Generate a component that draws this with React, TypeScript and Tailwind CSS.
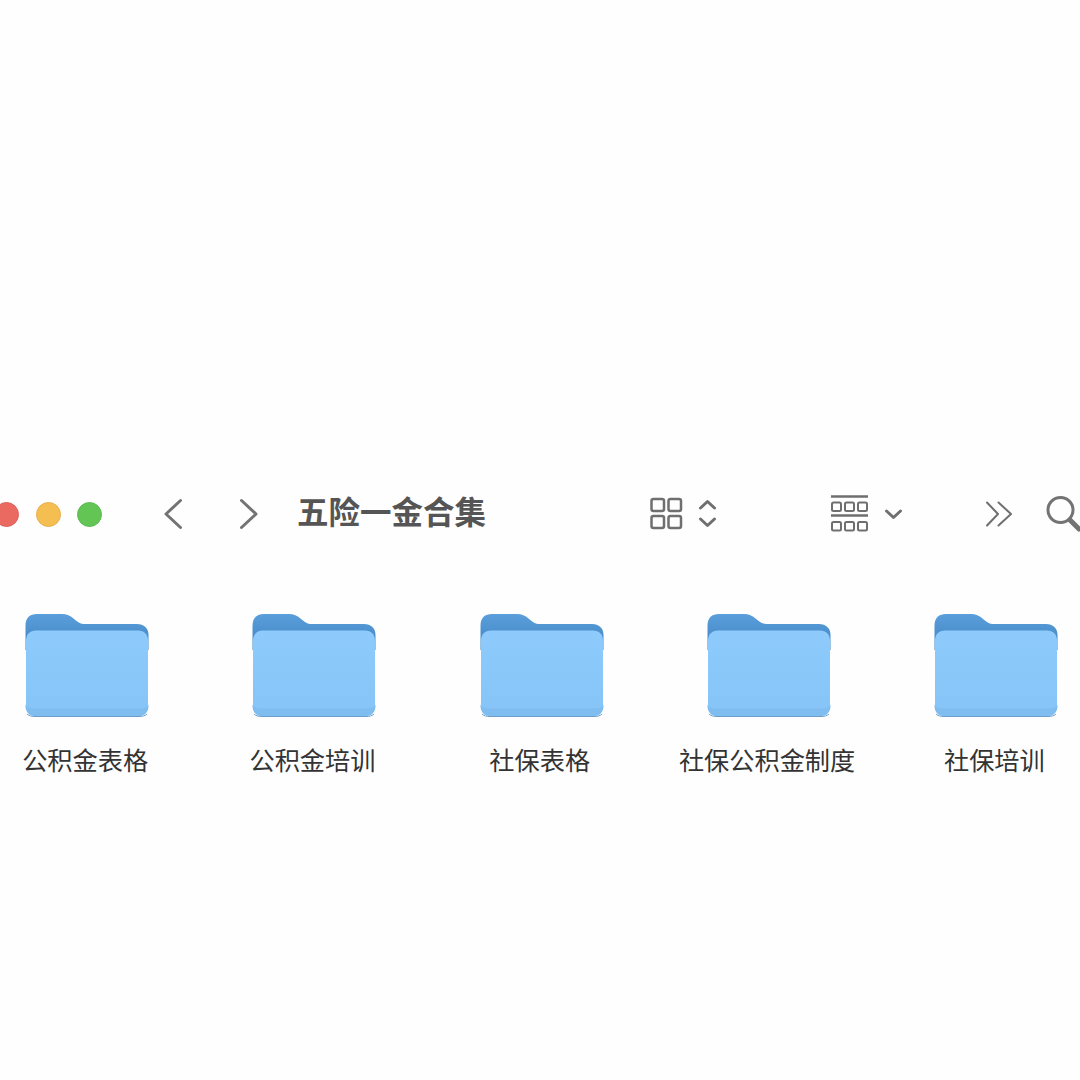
const folders = ["公积金表格", "公积金培训", "社保表格", "社保公积金制度", "社保培训"];

function Folder() {
  return (
    <svg width="126" height="108" viewBox="0 0 126 108" fill="none">
      <defs>
        <linearGradient id="folderBack" x1="0" y1="0" x2="0" y2="1">
          <stop offset="0" stopColor="#5a9edb" />
          <stop offset="1" stopColor="#3f83c2" />
        </linearGradient>
        <linearGradient id="folderFront" x1="0" y1="0" x2="0" y2="1">
          <stop offset="0" stopColor="#8ecbfc" />
          <stop offset="1" stopColor="#86c4f7" />
        </linearGradient>
      </defs>
      <path
        d="M1.500 16C1.500 7.500 6 4 13 4H38C43 4 46 5.500 49.500 8.500C53.500 12 56 14 61 14H113C120 14 124.500 18 124.500 25V40H1.500Z"
        fill="url(#folderBack)"
      />
      <path d="M2 31C2 24 6 20.500 12 20.500H114C120 20.500 124 24 124 31V96C124 102 120.500 106 115 106H11C5.500 106 2 102 2 96Z" fill="url(#folderFront)" />
      <path d="M1.500 94.500C2.500 97 5 98.500 9 98.500H117C121 98.500 123.500 97 124.500 94.500V96C124.500 102 120.500 106 115 106H11C5.500 106 1.500 102 1.500 96Z" fill="#7fbcf0" />
      <path d="M3 104C5 106 8 106.500 11 106.500H115C118 106.500 121 106 123 104" stroke="#6e9fcb" strokeWidth="1" />
    </svg>
  );
}

function Back() {
  return (
    <svg width="22" height="32" viewBox="0 0 22 32" fill="none" stroke="#737373" strokeWidth="3" strokeLinecap="round" strokeLinejoin="round">
      <path d="M17.500 2.500L3 16L17.500 29.500" />
    </svg>
  );
}

function Forward() {
  return (
    <svg width="22" height="32" viewBox="0 0 22 32" fill="none" stroke="#737373" strokeWidth="3" strokeLinecap="round" strokeLinejoin="round">
      <path d="M4.500 2.500L19 16L4.500 29.500" />
    </svg>
  );
}

function GridIcon() {
  return (
    <svg width="70" height="34" viewBox="0 0 70 34" fill="none" stroke="#6f6f6f" strokeWidth="2.500">
      <rect x="1.500" y="2" width="12.500" height="12" rx="2" />
      <rect x="18.500" y="2" width="12.500" height="12" rx="2" />
      <rect x="1.500" y="19" width="12.500" height="12" rx="2" />
      <rect x="18.500" y="19" width="12.500" height="12" rx="2" />
      <path d="M50.500 11L57.500 4.500L64.500 11" strokeWidth="3" strokeLinecap="round" strokeLinejoin="round" />
      <path d="M50.500 22L57.500 28.500L64.500 22" strokeWidth="3" strokeLinecap="round" strokeLinejoin="round" />
    </svg>
  );
}

function GroupIcon() {
  return (
    <svg width="72" height="38" viewBox="0 0 72 38" fill="none" stroke="#6f6f6f" strokeWidth="2">
      <path d="M0 1.500H37M0 20.500H37" strokeWidth="2.500" />
      <rect x="1" y="7.500" width="9" height="8.500" rx="1.500" />
      <rect x="14" y="7.500" width="9" height="8.500" rx="1.500" />
      <rect x="27" y="7.500" width="9" height="8.500" rx="1.500" />
      <rect x="1" y="27" width="9" height="8.500" rx="1.500" />
      <rect x="14" y="27" width="9" height="8.500" rx="1.500" />
      <rect x="27" y="27" width="9" height="8.500" rx="1.500" />
      <path d="M55.500 16L62.500 22.500L69.500 16" strokeWidth="3" strokeLinecap="round" strokeLinejoin="round" />
    </svg>
  );
}

function More() {
  return (
    <svg width="26" height="26" viewBox="0 0 26 26" fill="none" stroke="#6f6f6f" strokeWidth="2" strokeLinecap="round" strokeLinejoin="round">
      <path d="M1 1.500L12 13L1 24.500" />
      <path d="M12.500 1.500L25 13L12.500 24.500" />
    </svg>
  );
}

function Search() {
  return (
    <svg width="36" height="36" viewBox="0 0 36 36" fill="none" stroke="#737373" strokeLinecap="round" className="shrink-0">
      <circle cx="14.500" cy="14" r="12.500" strokeWidth="3" />
      <path d="M24 24L33 33" strokeWidth="5" />
    </svg>
  );
}

export default function App() {
  return (
    <main className="w-[1080px] h-[1080px] overflow-hidden bg-[#fefefe] pt-[493px] font-['Liberation_Sans','Noto_Sans_CJK_SC',sans-serif]">
      <header className="flex items-center h-[42px] -ml-[6px]">
        <div className="flex items-center gap-[16.500px] shrink-0">
          <span className="w-[25px] h-[25px] rounded-full bg-[#ea6a61] border border-[#e0605a]" />
          <span className="w-[25px] h-[25px] rounded-full bg-[#f5be50] border border-[#e8b04c]" />
          <span className="w-[25px] h-[25px] rounded-full bg-[#62c554] border border-[#5cbc50]" />
        </div>
        <div className="ml-[61px] shrink-0 flex"><Back /></div>
        <div className="ml-[52px] shrink-0 flex"><Forward /></div>
        <h1 className="ml-[38px] w-[188px] shrink-0 whitespace-nowrap text-[31.500px] leading-none font-bold text-[#555555]">五险一金合集</h1>
        <div className="ml-[165px] shrink-0 flex"><GridIcon /></div>
        <div className="ml-[111px] shrink-0 flex"><GroupIcon /></div>
        <div className="ml-[83px] shrink-0 flex"><More /></div>
        <div className="ml-[34px] shrink-0 flex"><Search /></div>
      </header>

      <section className="flex mt-[75px] ml-[-26.500px]">
        {folders.map((name) => (
          <div key={name} className="flex flex-col items-center w-[227.300px] shrink-0">
            <Folder />
            <span className="mt-[26px] mr-[4px] whitespace-nowrap text-[25.200px] leading-[34px] text-[#333333]">{name}</span>
          </div>
        ))}
      </section>
    </main>
  );
}
